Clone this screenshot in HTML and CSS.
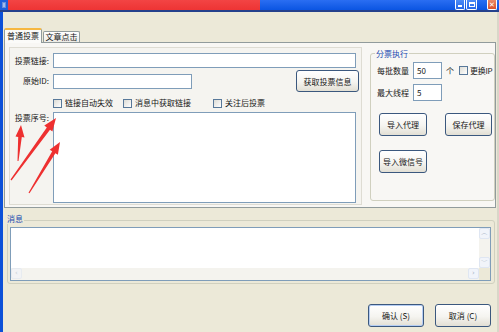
FILE: index.html
```html
<!DOCTYPE html>
<html>
<head>
<meta charset="utf-8">
<link rel="stylesheet" href="styles.css">
</head>
<body>
<div class="window">
  <div class="titlebar">
    <div class="ticon"><i></i></div>
    <div class="tred"></div>
    <div class="tblue">
      <span class="wbtn wmin"><i></i></span>
      <span class="wbtn wmax"><i></i></span>
      <span class="wbtn wclose">✕</span>
    </div>
  </div>
  <div class="client">
    <div class="menuband"></div>
    <div class="tabs">
      <div class="tab active">普通投票</div>
      <div class="tab tab2">文章点击</div>
    </div>
    <div class="tabpanel">
      <div class="leftpanel">
        <div class="row r1"><span class="lbl">投票链接:</span><span class="input w-long"></span></div>
        <div class="row r2"><span class="lbl">原始ID:</span><span class="input w-short"></span><span class="btn btn-fetch">获取投票信息</span></div>
        <div class="row checks">
          <span class="chk c1"><i class="box"></i>链接自动失效</span>
          <span class="chk c2"><i class="box"></i>消息中获取链接</span>
          <span class="chk"><i class="box"></i>关注后投票</span>
        </div>
        <div class="row r4"><span class="lbl lbl-top">投票序号:</span><span class="input area"></span></div>
      </div>
      <div class="group">
        <div class="gtitle">分票执行</div>
        <div class="grow ga"><span class="glbl">每批数量</span><span class="input num">50</span><span class="unit">个</span><i class="box gbox"></i><span class="ip">更换IP</span></div>
        <div class="grow gb"><span class="glbl">最大线程</span><span class="input num">5</span></div>
        <div class="brow b1"><span class="btn gbtn">导入代理</span><span class="btn gbtn gbtn2">保存代理</span></div>
        <div class="brow b2"><span class="btn gbtn">导入微信号</span></div>
      </div>
    </div>
    <div class="msggroup">
      <div class="mtitle">消息</div>
      <div class="msgbox">
        <div class="msgtext"></div>
        <div class="vscroll"><span class="sb">︿</span><span class="sb">﹀</span></div>
        <div class="hscroll"><span class="sb sbl">‹</span><span class="sb sbr">›</span></div>
        <div class="corner"></div>
      </div>
    </div>
    <div class="footer">
      <span class="btn fbtn ok">确认 (S)</span>
      <span class="btn fbtn">取消 (C)</span>
    </div>
  </div>
  <svg class="arrows" width="499" height="332" viewBox="0 0 499 332">
    <polygon points="18.5,161 21.8,137.1 24.5,137.4 21,125 15.5,136.6 18.2,136.9 17.5,161" />
    <polygon points="11.5,180.4 50,129.7 52.4,131.5 56,118 44.3,125.6 46.8,127.4 10.5,179.6" />
    <polygon points="29.5,193.3 55.4,153.2 57.9,154.7 60,142 49.7,149.8 52.2,151.3 28.5,192.7" />
  </svg>
</div>
</body>
</html>
```

FILE: styles.css
```css
* { box-sizing: border-box; margin: 0; padding: 0; }
html, body { width: 499px; height: 332px; overflow: hidden; }
body {
  font-family: "Noto Sans CJK SC", "Liberation Sans", sans-serif;
  font-size: 8px;
  color: #161616;
  background: #ece9d8;
}
.window {
  position: relative;
  width: 499px;
  height: 332px;
  background: #ece9d8;
  display: flex;
  flex-direction: column;
}

/* title bar */
.titlebar {
  height: 12px;
  display: flex;
  border-bottom: 2px solid #25418c;
  flex: none;
}
.ticon {
  width: 8px;
  background: #1f5fdc;
  display: flex;
  align-items: center;
  justify-content: center;
}
.ticon i { width: 4px; height: 6px; background: #9fbcef; border: 1px solid #6c8fd8; }
.tred { width: 252px; background: linear-gradient(#f34444, #ee3434); }
.tblue {
  flex: 1;
  background: linear-gradient(#2a6ef2, #0b55e2);
  display: flex;
  justify-content: flex-end;
  padding-right: 2px;
}
.wbtn {
  height: 10px;
  border: 1px solid #fff;
  border-top: none;
  border-radius: 0 0 2px 2px;
  background: linear-gradient(#4d8cf6, #2667e8);
  display: flex;
  align-items: flex-end;
  justify-content: center;
}
.wmin { width: 10px; }
.wmin i { width: 4px; height: 2px; background: #fff; margin-bottom: 2px; }
.wmax { width: 11px; margin-left: 1px; }
.wmax i { width: 6px; height: 5px; border: 1px solid #fff; border-top-width: 2px; margin-bottom: 2px; }
.wclose {
  width: 10px;
  margin-left: 10px;
  background: linear-gradient(#e98a6a, #d94f2b);
  color: #fff;
  font-size: 7px;
  line-height: 8px;
  font-family: "DejaVu Sans", sans-serif;
  font-weight: bold;
}

/* client */
.client {
  flex: 1;
  display: flex;
  flex-direction: column;
  border-left: 3px solid #0c50d8;
  border-right: 2px solid #d9d6c8;
}
.menuband { height: 16px; flex: none; }
.tabs {
  height: 14px;
  flex: none;
  display: flex;
  align-items: flex-end;
  padding-left: 1px;
}
.tab {
  width: 37px;
  height: 11px;
  border: 1px solid #919b9c;
  border-bottom: none;
  border-radius: 2px 2px 0 0;
  background: linear-gradient(#ffffff, #ecebe5);
  text-align: center;
  line-height: 10px;
  white-space: nowrap;
}
.tab.active {
  width: 38px;
  height: 15px;
  margin-bottom: -1px;
  position: relative;
  z-index: 1;
  background: #fbfbf9;
  border-top: 2px solid #f6b740;
  line-height: 12px;
}
.tab2 { margin-left: 1px; }

.tabpanel {
  height: 166px;
  flex: none;
  margin: 0 1px;
  border: 1px solid #919b9c;
  background: #f8f7f4;
  display: flex;
  align-items: flex-start;
  padding: 4px 0 0 4px;
}
.leftpanel {
  width: 353px;
  height: 158px;
  border: 1px solid #dedcd3;
  background: #f5f4f0;
  padding: 5px 2px 0 0;
  display: flex;
  flex-direction: column;
}
.row { display: flex; align-items: center; }
.lbl {
  width: 43px;
  padding-right: 4px;
  text-align: right;
  white-space: nowrap;
  line-height: 10px;
}
.lbl-top { align-self: flex-start; padding-top: 1px; }
.input {
  background: #fff;
  border: 1px solid #7f9db9;
  display: block;
}
.w-long { width: 303px; height: 15px; }
.r2 { margin-top: 2px; height: 22px; }
.w-short { width: 139px; height: 15px; }
.btn {
  display: flex;
  align-items: center;
  justify-content: center;
  white-space: nowrap;
  border: 1px solid #3b587e;
  border-radius: 3px;
  background: linear-gradient(#ffffff, #f5f4f0 55%, #e2dfd4);
  color: #141414;
  font-size: 8px;
}
.btn-fetch { margin-left: auto; width: 63px; height: 22px; }
.checks { margin-top: 6px; height: 10px; padding-left: 43px; }
.chk { display: flex; align-items: center; white-space: nowrap; line-height: 10px; }
.c1 { width: 70px; }
.c2 { width: 90px; }
.box {
  display: block;
  width: 9px;
  height: 9px;
  border: 1px solid #587899;
  background: linear-gradient(135deg, #dddcd5, #ffffff);
  margin-right: 3px;
  flex: none;
}
.r4 { margin-top: 4px; align-items: flex-start; }
.area { width: 303px; height: 91px; }

/* right group */
.group {
  width: 125px;
  height: 148px;
  margin: 6px 0 0 8px;
  border: 1px solid #d0d0bf;
  border-radius: 3px;
}
.gtitle {
  margin: -6px 0 0 4px;
  padding: 0 1px;
  width: fit-content;
  background: #f8f7f4;
  color: #2149b0;
  line-height: 11px;
}
.grow { display: flex; align-items: center; height: 17px; }
.ga { margin-top: 3px; }
.gb { margin-top: 5px; }
.glbl { width: 42px; padding-left: 6px; white-space: nowrap; }
.num { width: 29px; height: 17px; padding-left: 3px; line-height: 15px; }
.unit { margin-left: 4px; }
.gbox { margin-left: 5px; margin-right: 2px; }
.ip { white-space: nowrap; letter-spacing: -0.3px; }
.brow { display: flex; }
.b1 { margin-top: 12px; }
.b2 { margin-top: 14px; }
.gbtn { width: 48px; height: 23px; margin-left: 8px; }
.gbtn2 { width: 47px; margin-left: 18px; }

/* message group */
.msggroup {
  height: 64px;
  flex: none;
  margin: 12px 2px 0 4px;
  border: 1px solid #d0d0bf;
  border-radius: 3px;
  display: flex;
  flex-direction: column;
}
.mtitle {
  margin: -8px 0 0 -2px;
  width: fit-content;
  padding: 0 1px;
  background: #ece9d8;
  color: #2149b0;
  line-height: 11px;
}
.msgbox {
  margin: 3px 3px 0 2px;
  height: 54px;
  border: 1px solid #7f9db9;
  background: #fff;
  display: grid;
  grid-template-columns: 1fr 11px;
  grid-template-rows: 1fr 12px;
}
.msgtext { grid-column: 1; grid-row: 1; }
.vscroll {
  grid-column: 2;
  grid-row: 1;
  background: #f4f3ee;
  display: flex;
  flex-direction: column;
  justify-content: space-between;
}
.hscroll {
  grid-column: 1;
  grid-row: 2;
  background: #f4f3ee;
  display: flex;
  justify-content: space-between;
}
.corner { grid-column: 2; grid-row: 2; background: #ece9d8; }
.sb {
  width: 11px;
  height: 11px;
  border: 1px solid #dfe6f2;
  border-radius: 2px;
  background: #f1f4fa;
  color: #a9b4c6;
  font-size: 7px;
  line-height: 9px;
  text-align: center;
  font-family: "DejaVu Sans", sans-serif;
}
.sbl { opacity: 0.6; }

/* footer */
.footer {
  flex: 1;
  display: flex;
  justify-content: flex-end;
  align-items: flex-start;
  padding: 20px 6px 0 0;
  gap: 11px;
}
.fbtn { width: 56px; height: 23px; }
.ok { box-shadow: inset 0 0 0 1px #b5cdf3; }

/* overlay arrows */
.arrows {
  position: absolute;
  left: 0;
  top: 0;
  pointer-events: none;
}
.arrows polygon { fill: #ee3030; }
```
